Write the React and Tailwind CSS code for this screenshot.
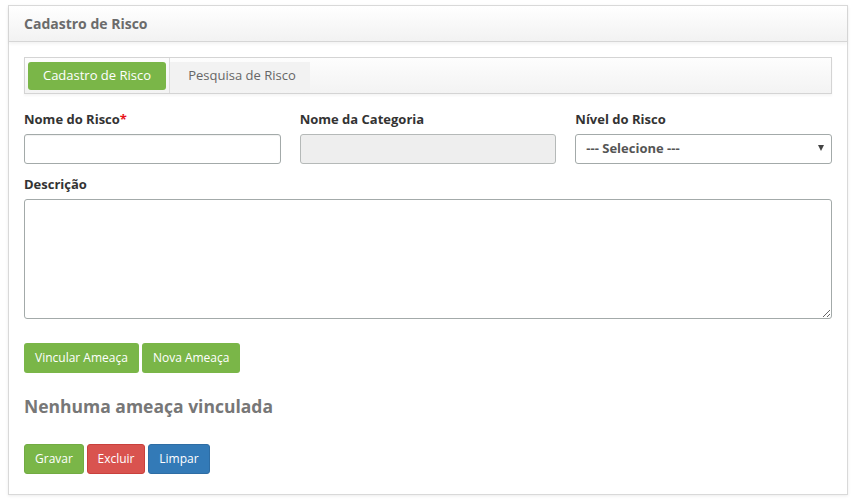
import React from "react";

const font = { fontFamily: '"Open Sans", "Noto Sans", Arial, sans-serif' };

function Field({ label, required, children }) {
  return (
    <div className="flex flex-col">
      <label className="text-[13px] font-bold text-[#333] leading-[18px] mb-[6px]">
        {label}
        {required && <span className="text-[#e8141b]">*</span>}
      </label>
      {children}
    </div>
  );
}

export default function App() {
  return (
    <div className="bg-white w-[853px] h-[501px] pl-2 pr-[5px] pt-[5px]" style={font}>
      <div className="border border-[#d9d9d9] shadow-[0_1px_3px_rgba(0,0,0,0.08)] h-[490px] bg-white">
        {/* Header */}
        <div className="h-[36px] border-b border-[#d6d6d6] bg-gradient-to-b from-white to-[#f2f2f2] px-[15px] flex items-center shadow-[0_2px_3px_rgba(0,0,0,0.05)]">
          <h1 className="text-[14px] font-bold text-[#6b6b6b]">Cadastro de Risco</h1>
        </div>

        <div className="px-[15px] pt-[15px]">
          {/* Tabs */}
          <div className="h-[37px] border border-[#d4d4d4] bg-gradient-to-b from-[#fdfdfd] to-[#f3f3f3] flex items-center pl-[3px] shadow-[0_2px_2px_rgba(0,0,0,0.04)]">
            <button className="h-[28px] w-[138px] rounded-[3px] bg-[#7ab648] text-white text-[13px]">
              Cadastro de Risco
            </button>
            <div className="ml-[3px] border-l border-[#dcdcdc] h-[35px] flex items-center">
              <button className="h-[28px] w-[140px] pl-[4px] bg-[#f2f2f2] text-[#666] text-[13px]">
                Pesquisa de Risco
              </button>
            </div>
          </div>

          {/* Row of fields */}
          <div className="grid grid-cols-3 gap-x-[19px] mt-[16px]">
            <Field label="Nome do Risco" required>
              <input className="h-[30px] border border-[#a3aaa9] rounded-[3px] bg-white shadow-[inset_0_1px_1px_rgba(0,0,0,0.06)] px-2 text-[13px] outline-none" />
            </Field>
            <Field label="Nome da Categoria">
              <input disabled className="h-[30px] border border-[#b5b9b8] rounded-[3px] bg-[#eeeeee] px-2 text-[13px] outline-none" />
            </Field>
            <Field label="Nível do Risco">
              <div className="relative">
                <select className="appearance-none w-full h-[30px] border border-[#a3aaa9] rounded-[3px] bg-white px-[10px] text-[13px] font-bold text-[#555] outline-none">
                  <option>--- Selecione ---</option>
                </select>
                <span className="absolute right-[8px] top-[11px] w-0 h-0 border-l-[3.5px] border-r-[3.5px] border-t-[6px] border-l-transparent border-r-transparent border-t-[#444]" />
              </div>
            </Field>
          </div>

          <div className="mt-[11px]">
            <Field label="Descrição">
              <textarea className="h-[120px] border border-[#a3aaa9] rounded-[3px] bg-white px-2 text-[13px] outline-none" />
            </Field>
          </div>

          <div className="flex gap-[3px] mt-[24px]">
            <button className="h-[30px] px-[11px] rounded-[3px] bg-[#7ab648] text-white text-[12px]">
              Vincular Ameaça
            </button>
            <button className="h-[30px] px-[11px] rounded-[3px] bg-[#7ab648] text-white text-[12px]">
              Nova Ameaça
            </button>
          </div>

          <h2 className="mt-[21px] text-[17.5px] font-bold text-[#777] leading-[24px]">
            Nenhuma ameaça vinculada
          </h2>

          <div className="flex gap-[3px] mt-[26px]">
            <button className="h-[30px] w-[60px] rounded-[3px] bg-[#7ab648] border border-[#72ab42] text-white text-[12px]">
              Gravar
            </button>
            <button className="h-[30px] w-[58px] rounded-[3px] bg-[#d9534f] border border-[#c9403c] text-white text-[12px]">
              Excluir
            </button>
            <button className="h-[30px] w-[62px] rounded-[3px] bg-[#337ab7] border border-[#2e6da4] text-white text-[12px]">
              Limpar
            </button>
          </div>
        </div>
      </div>
    </div>
  );
}
